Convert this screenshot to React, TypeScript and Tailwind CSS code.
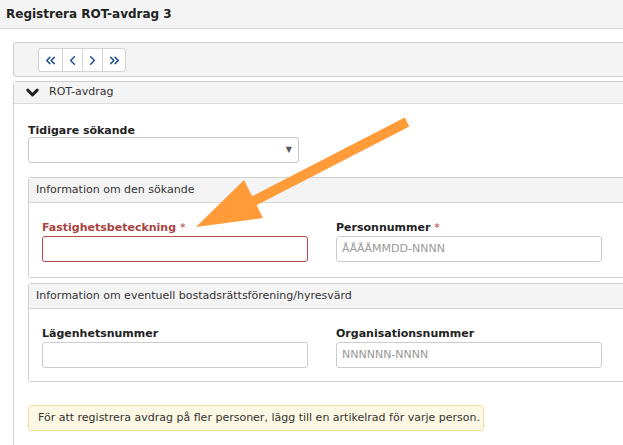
import React from "react";
import { ChevronsLeft, ChevronLeft, ChevronRight, ChevronsRight, ChevronDown } from "lucide-react";

export default function App() {
  const font = { fontFamily: '"DejaVu Sans", Verdana, sans-serif' };
  return (
    <div className="relative w-[623px] h-[445px] overflow-hidden bg-white text-[11px] text-[#222]" style={font}>
      <div className="h-[29px] bg-[#f4f4f4] border-b border-[#dcdcdc] px-[6px] flex items-center">
        <span className="font-bold text-[12px] text-[#222]">Registrera ROT-avdrag 3</span>
      </div>
      <div className="pl-[13px] pt-[13px] w-[680px]">
        <div className="h-[35px] border border-[#cfcfcf] rounded-l-[3px] bg-[#f4f4f4] pl-[24px] pt-[5px]">
          <div className="inline-flex h-[24px] border border-[#d4d4d4] rounded-[3px] bg-white text-[#1d4f8f]">
            <div className="w-[24px] flex items-center justify-center border-r border-[#d4d4d4]"><ChevronsLeft size={15} strokeWidth={2.4} /></div>
            <div className="w-[20px] flex items-center justify-center border-r border-[#d4d4d4]"><ChevronLeft size={15} strokeWidth={2.4} /></div>
            <div className="w-[20px] flex items-center justify-center border-r border-[#d4d4d4]"><ChevronRight size={15} strokeWidth={2.4} /></div>
            <div className="w-[22px] flex items-center justify-center"><ChevronsRight size={15} strokeWidth={2.4} /></div>
          </div>
        </div>
        <div className="mt-[4px] border border-[#cfcfcf] rounded-l-[3px] h-[370px]">
          <div className="h-[22px] bg-[#f4f4f4] border-b border-[#dcdcdc] flex items-center pl-[9px]">
            <ChevronDown size={19} strokeWidth={3.6} className="text-[#222]" />
            <span className="ml-[7px] text-[#333]">ROT-avdrag</span>
          </div>
          <div className="pl-[14px] pr-[20px]">
            <div className="mt-[20px] font-bold text-[#222] leading-[13px]">Tidigare sökande</div>
            <div className="w-[271px] h-[26px] border border-[#c8c8c8] rounded-[3px] flex items-center justify-end pr-[6px]">
              <span className="text-[8px] text-[#555]">▼</span>
            </div>
            <div className="mt-[14px] border border-[#d0d0d0] rounded-[3px] h-[101px]">
              <div className="h-[25px] bg-[#f4f4f4] border-b border-[#d4d4d4] flex items-center pl-[7px] text-[#333]">Information om den sökande</div>
              <div className="flex gap-[28px] pl-[13px] pt-[18px]">
                <div className="w-[266px]">
                  <div className="font-bold text-[#a94442] leading-[14px]">Fastighetsbeteckning <span className="font-normal">*</span></div>
                  <div className="mt-[1px] h-[26px] border border-[#b94a48] rounded-[3px]" />
                </div>
                <div className="w-[266px]">
                  <div className="font-bold text-[#222] leading-[14px]">Personnummer <span className="font-normal text-[#a94442]">*</span></div>
                  <div className="mt-[1px] h-[26px] border border-[#cccccc] rounded-[3px] flex items-center pl-[5px] text-[#999]">ÅÅÅÅMMDD-NNNN</div>
                </div>
              </div>
            </div>
            <div className="mt-[5px] border border-[#d0d0d0] rounded-[3px] h-[99px]">
              <div className="h-[25px] bg-[#f4f4f4] border-b border-[#d4d4d4] flex items-center pl-[7px] text-[#333]">Information om eventuell bostadsrättsförening/hyresvärd</div>
              <div className="flex gap-[28px] pl-[13px] pt-[18px]">
                <div className="w-[266px]">
                  <div className="font-bold text-[#222] leading-[14px]">Lägenhetsnummer</div>
                  <div className="mt-[1px] h-[26px] border border-[#cccccc] rounded-[3px]" />
                </div>
                <div className="w-[266px]">
                  <div className="font-bold text-[#222] leading-[14px]">Organisationsnummer</div>
                  <div className="mt-[1px] h-[26px] border border-[#cccccc] rounded-[3px] flex items-center pl-[5px] text-[#999]">NNNNNN-NNNN</div>
                </div>
              </div>
            </div>
            <div className="mt-[23px] w-[456px] h-[26px] border border-[#efe0a8] bg-[#fcf8e3] rounded-[3px] flex items-center pl-[9px] text-[#333]">
              För att registrera avdrag på fler personer, lägg till en artikelrad för varje person.
            </div>
          </div>
        </div>
      </div>
      <svg className="absolute left-0 top-0 pointer-events-none" width="623" height="445" viewBox="0 0 623 445">
        <line x1="407" y1="122" x2="250" y2="203" stroke="#ff9b38" strokeWidth="10" />
        <polygon points="196,227 244,180 263,218" fill="#ff9b38" />
      </svg>
    </div>
  );
}
